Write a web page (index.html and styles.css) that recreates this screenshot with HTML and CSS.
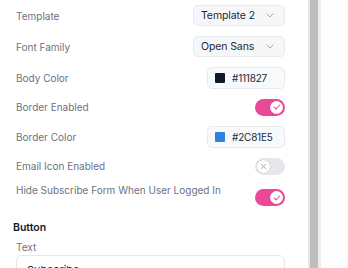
FILE: index.html
```html
<!DOCTYPE html>
<html lang="en">
<head>
  <meta charset="UTF-8">
  <title>Subscribe Widget Settings</title>
  <meta name="viewport" content="width=device-width, initial-scale=1.0">
  <link rel="stylesheet" href="styles.css">
</head>
<body>
  <div class="layout">
    <div class="panel">
      <!-- 일반 설정 -->
      <div class="row">
        <span class="label">Template</span>
        <div class="select">
          <span>Template 2</span>
          <svg class="chevron" width="8" height="5" viewBox="0 0 8 5"><path d="M1 1l3 3 3-3" fill="none" stroke="#a1a6ae" stroke-width="1" stroke-linecap="round" stroke-linejoin="round"/></svg>
        </div>
      </div>
      <div class="row">
        <span class="label">Font Family</span>
        <div class="select">
          <span>Open Sans</span>
          <svg class="chevron" width="8" height="5" viewBox="0 0 8 5"><path d="M1 1l3 3 3-3" fill="none" stroke="#a1a6ae" stroke-width="1" stroke-linecap="round" stroke-linejoin="round"/></svg>
        </div>
      </div>
      <div class="row">
        <span class="label">Body Color</span>
        <div class="color-input">
          <span class="swatch swatch-dark"></span>
          <span>#111827</span>
        </div>
      </div>
      <div class="row row-toggle">
        <span class="label">Border Enabled</span>
        <div class="toggle on">
          <span class="knob">
            <svg width="8" height="8" viewBox="0 0 8 8"><path d="M1.3 4.2l1.8 1.8 3.6-4" fill="none" stroke="#ec4899" stroke-width="1.1" stroke-linecap="round" stroke-linejoin="round"/></svg>
          </span>
        </div>
      </div>
      <div class="row">
        <span class="label">Border Color</span>
        <div class="color-input">
          <span class="swatch swatch-blue"></span>
          <span>#2C81E5</span>
        </div>
      </div>
      <div class="row row-toggle">
        <span class="label">Email Icon Enabled</span>
        <div class="toggle">
          <span class="knob">
            <svg width="7" height="7" viewBox="0 0 7 7"><path d="M1.5 1.5l4 4M5.5 1.5l-4 4" fill="none" stroke="#9ca3af" stroke-width="1" stroke-linecap="round"/></svg>
          </span>
        </div>
      </div>
      <div class="row row-last">
        <span class="label">Hide Subscribe Form When User Logged In</span>
        <div class="toggle on">
          <span class="knob">
            <svg width="8" height="8" viewBox="0 0 8 8"><path d="M1.3 4.2l1.8 1.8 3.6-4" fill="none" stroke="#ec4899" stroke-width="1.1" stroke-linecap="round" stroke-linejoin="round"/></svg>
          </span>
        </div>
      </div>

      <!-- 버튼 설정 -->
      <h3 class="section-title">Button</h3>
      <div class="field">
        <span class="label">Text</span>
        <div class="text-input">Subscribe</div>
      </div>
    </div>
    <div class="scrollbar"><div class="thumb"></div></div>
    <div class="side"></div>
  </div>
</body>
</html>
```
FILE: styles.css
```css
/* 기본 리셋 */
html, body {
  margin: 0;
  padding: 0;
  width: 100%;
  height: 100%;
  background-color: #ffffff;
  box-sizing: border-box;
  font-family: 'Inter', 'Liberation Sans', sans-serif;
  overflow: hidden;
}
*, *::before, *::after {
  box-sizing: inherit;
}
.layout {
  display: flex;
  height: 268px;
}
.panel {
  width: 308px;
  padding: 0 23px 0 16px;
}
/* 설정 행 */
.row {
  display: flex;
  justify-content: space-between;
  align-items: center;
  height: 31px;
}
.row-toggle {
  height: 28px;
}
.row-last {
  height: 34px;
  align-items: flex-start;
  padding-top: 9px;
}
.row-last .label {
  margin-top: -7px;
}
.label {
  font-size: 10px;
  line-height: 16px;
  color: #6b7280;
}
.select {
  display: flex;
  align-items: center;
  justify-content: space-between;
  width: 92px;
  height: 21px;
  padding: 0 10px 0 7px;
  background-color: #f6f7f8;
  border: 1px solid #e8eaed;
  border-radius: 5px;
  font-size: 10.5px;
  letter-spacing: -0.1px;
  color: #1f2937;
}
.color-input {
  display: flex;
  align-items: center;
  gap: 7px;
  width: 78px;
  height: 22px;
  padding: 0 7px;
  background-color: #f8f9fa;
  border: 1px solid #e8eaed;
  border-radius: 5px;
  font-size: 10px;
  letter-spacing: -0.2px;
  color: #1f2937;
}
.swatch {
  flex-shrink: 0;
  width: 10px;
  height: 10px;
  border-radius: 1px;
}
.swatch-dark {
  background-color: #111827;
}
.swatch-blue {
  background-color: #2c81e5;
}
/* 토글 스위치 */
.toggle {
  display: flex;
  align-items: center;
  width: 30px;
  height: 17px;
  padding: 0 2px;
  border-radius: 9px;
  background-color: #e5e7eb;
}
.toggle.on {
  justify-content: flex-end;
  background-color: #ec4899;
}
.knob {
  display: flex;
  align-items: center;
  justify-content: center;
  width: 13px;
  height: 13px;
  border-radius: 50%;
  background-color: #ffffff;
  box-shadow: 0 0 1px rgba(0, 0, 0, 0.25);
}
/* 버튼 섹션 */
.section-title {
  margin: 6px 0 0 -3px;
  font-size: 10.5px;
  font-weight: 600;
  color: #111827;
  line-height: 16px;
}
.field {
  margin-top: 3px;
}
.field .label {
  display: block;
}
.text-input {
  margin-top: 0;
  height: 30px;
  padding: 7px 10px;
  border: 1px solid #e5e7eb;
  border-radius: 6px;
  font-size: 11px;
  color: #1f2937;
}
/* 스크롤바 */
.scrollbar {
  width: 13px;
  border-left: 2px solid #e6e6e6;
  border-right: 3px solid #ececec;
  background-color: #bdbdbd;
}
.side {
  flex: 1;
  background-color: #fdfdfd;
}
```
